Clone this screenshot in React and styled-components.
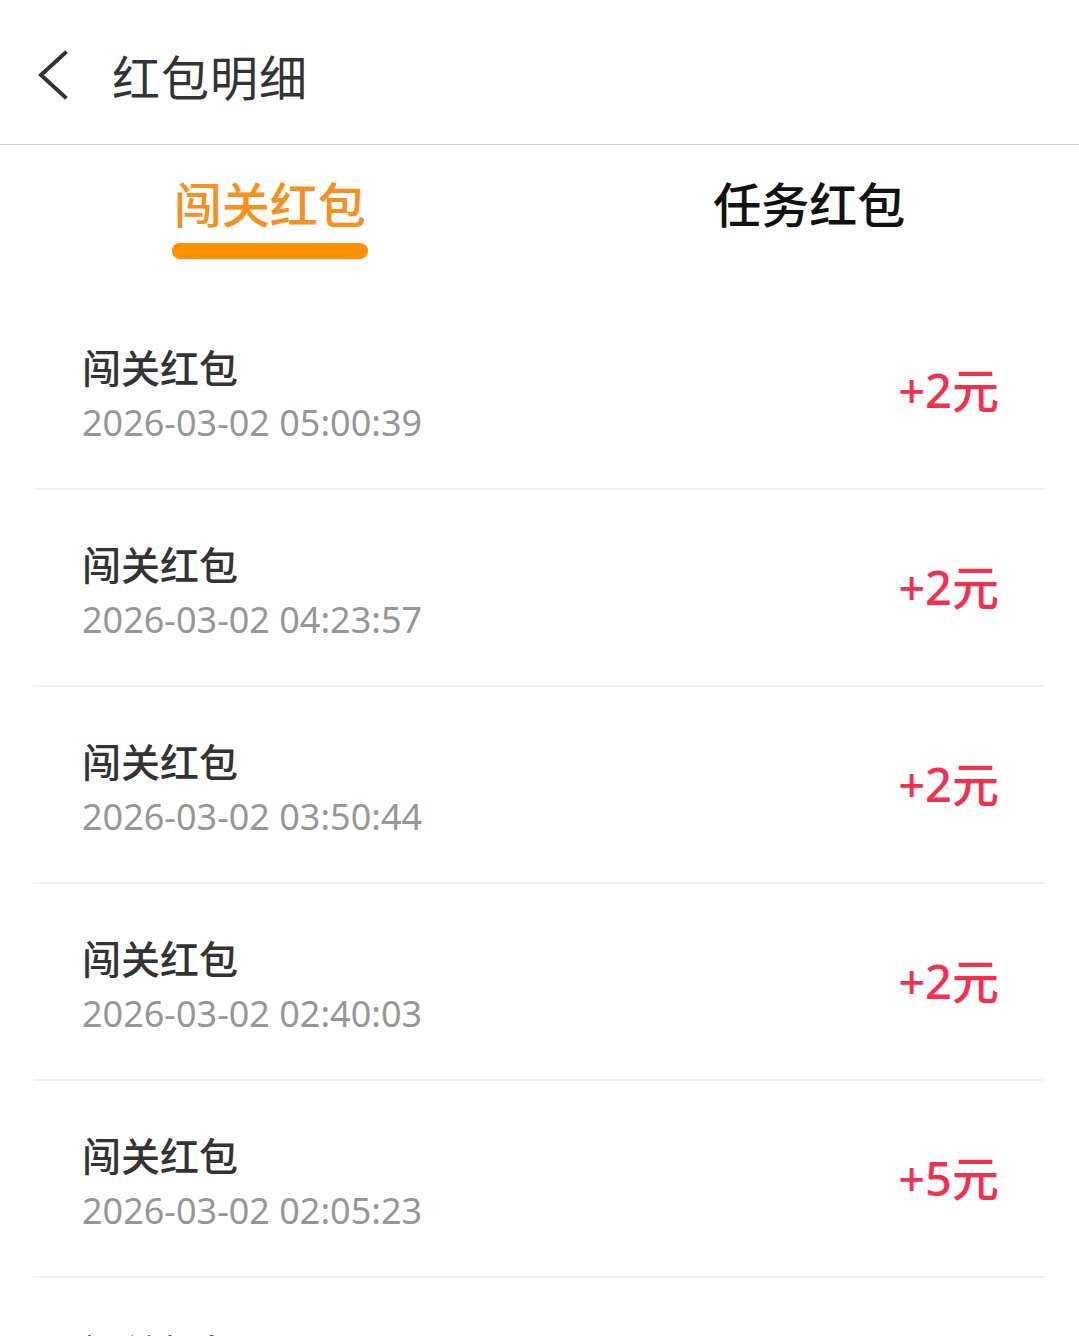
import React, { useState } from 'react'
import styled, { createGlobalStyle } from 'styled-components'

const fontStack = `"Noto Sans", "Noto Sans CJK SC", sans-serif`
const orange = '#f7901c'
const red = '#f2304f'

const records = [
  { title: '闯关红包', time: '2026-03-02 05:00:39', amount: 2 },
  { title: '闯关红包', time: '2026-03-02 04:23:57', amount: 2 },
  { title: '闯关红包', time: '2026-03-02 03:50:44', amount: 2 },
  { title: '闯关红包', time: '2026-03-02 02:40:03', amount: 2 },
  { title: '闯关红包', time: '2026-03-02 02:05:23', amount: 5 },
  { title: '闯关红包', time: '2026-03-02 01:32:10', amount: 2 },
]

const tabs = ['闯关红包', '任务红包']

const App = () => {
  const [active, setActive] = useState(0)

  return (
    <>
      <GlobalStyle />
      <Page>
        <Header>
          <BackButton aria-label="返回">
            <svg width="34" height="50" viewBox="0 0 34 50">
              <path
                d="M29 3 L5 25 L29 47"
                fill="none"
                stroke="#333"
                strokeWidth="4"
                strokeLinecap="square"
              />
            </svg>
          </BackButton>
          <Title>红包明细</Title>
        </Header>

        <TabBar>
          {tabs.map((t, i) => (
            <Tab key={t} active={i === active} onClick={() => setActive(i)}>
              <TabLabel active={i === active}>{t}</TabLabel>
              <TabIndicator active={i === active} />
            </Tab>
          ))}
        </TabBar>

        <List>
          {records.map((r, i) => (
            <Row key={i}>
              <RowInfo>
                <RowTitle>{r.title}</RowTitle>
                <RowTime>{r.time}</RowTime>
              </RowInfo>
              <Amount>+{r.amount}元</Amount>
            </Row>
          ))}
        </List>
      </Page>
    </>
  )
}

const GlobalStyle = createGlobalStyle`
  html, body {
    margin: 0;
    padding: 0;
    background: #fff;
    font-family: ${fontStack};
  }
`

const Page = styled.div`
  width: 1079px;
  height: 1336px;
  overflow: hidden;
  background: #fff;
`

const Header = styled.header`
  height: 145px;
  display: flex;
  align-items: center;
  padding: 6px 0 0 36px;
  box-sizing: border-box;
  border-bottom: 1px solid #cfcfcf;
`

const BackButton = styled.button`
  border: 0;
  background: none;
  padding: 0;
  display: flex;
  align-items: center;
  width: 34px;
  height: 50px;
  cursor: pointer;
`

const Title = styled.h1`
  margin: 0 0 0 42px;
  font-size: 48px;
  font-weight: 400;
  color: #333;
  letter-spacing: 1px;
`

const TabBar = styled.nav`
  display: grid;
  grid-template-columns: 1fr 1fr;
  height: 148px;
`

const Tab = styled.div`
  display: flex;
  flex-direction: column;
  align-items: center;
  padding-top: 26px;
  cursor: pointer;
`

const TabLabel = styled.span`
  font-size: 48px;
  line-height: 68px;
  font-weight: 500;
  color: ${p => (p.active ? orange : '#111')};
`

const TabIndicator = styled.span`
  margin-top: 4px;
  width: 196px;
  height: 16px;
  border-radius: 8px;
  background: ${p => (p.active ? '#ff9005' : 'transparent')};
`

const List = styled.ul`
  list-style: none;
  margin: 0 34px;
  padding: 0;
`

const Row = styled.li`
  height: 197px;
  box-sizing: border-box;
  display: flex;
  align-items: center;
  justify-content: space-between;
  padding: 8px 46px 0 48px;
  border-bottom: 2px solid #f2f2f2;
`

const RowInfo = styled.div`
  display: flex;
  flex-direction: column;
`

const RowTitle = styled.span`
  font-size: 39px;
  line-height: 50px;
  color: #333;
  font-weight: 500;
`

const RowTime = styled.span`
  margin-top: 6px;
  font-size: 36px;
  line-height: 48px;
  color: #979797;
`

const Amount = styled.span`
  font-size: 47px;
  font-weight: 500;
  color: ${red};
  margin-top: -14px;
`

export default App
